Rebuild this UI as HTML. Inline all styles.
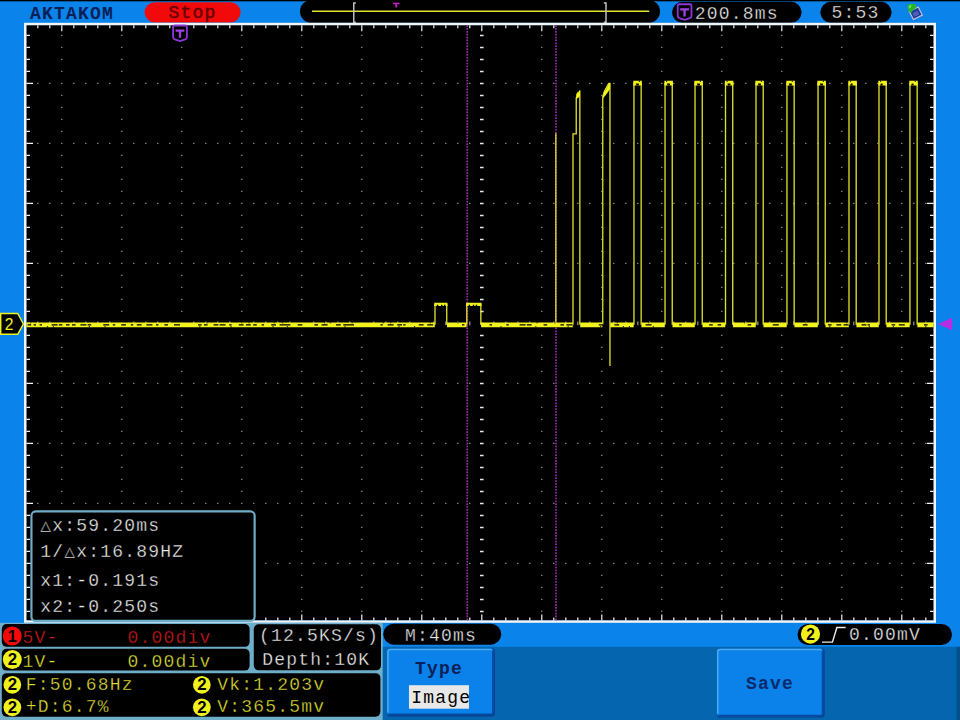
<!DOCTYPE html><html><head><meta charset="utf-8"><style>html,body{margin:0;padding:0;background:#0a84ea;width:960px;height:720px;overflow:hidden}</style></head><body><svg width="960" height="720" viewBox="0 0 800 600" style="display:block"><defs><style>text{font-family:"Liberation Mono",monospace;font-size:15px;letter-spacing:1px}.th{stroke:#000;stroke-width:0.26px}</style></defs><rect x="0" y="0" width="800" height="600" fill="#0a84ea"/><rect x="0" y="0" width="800" height="1.1" fill="#000"/><text x="25" y="15.8" fill="#0c2058" font-weight="bold">AKTAKOM</text><rect x="120.5" y="1.8" width="80" height="17" rx="8.5" fill="#f20a0a"/><text x="140.4" y="15.2" fill="#640000" stroke="#640000" stroke-width="0.35">Stop</text><rect x="250" y="0" width="300" height="19" rx="9.5" fill="#000"/><line x1="260" y1="9.3" x2="541" y2="9.3" stroke="#e2e232" stroke-width="1.3"/><path d="M296.5 2.5 H294.8 V18.5 H296.5" fill="none" stroke="#c4c4c4" stroke-width="1.2"/><path d="M503.2 2.5 H505 V18.5 H503.2" fill="none" stroke="#c4c4c4" stroke-width="1.2"/><path d="M327.5 2.3 H333 V3.6 H331 V6.3 H329.5 V3.6 H327.5Z" fill="#c81ec8"/><rect x="560" y="1.5" width="108" height="17.5" rx="8.75" fill="#000"/><path d="M566.25 3.55 H574.75 Q576.25 3.55 576.25 5.05 V13.530000000000001 Q576.25 14.73 574.25 15.330000000000002 L570.5 16.55 L566.75 15.330000000000002 Q564.75 14.73 564.75 13.530000000000001 V5.05 Q564.75 3.55 566.25 3.55Z" fill="#000" stroke="#8c36d8" stroke-width="1.5"/><path d="M566.86 7.73 H574.14 M570.5 7.73 V13.82" fill="none" stroke="#a040e8" stroke-width="1.9"/><text x="579" y="15.8" fill="#ececec" class="th">200.8ms</text><rect x="683.6" y="1.5" width="59.4" height="17.5" rx="8.75" fill="#000"/><text x="693" y="15.2" fill="#ececec" class="th">5:53</text><g><path d="M757.8 9.6 L765.2 5.8 L768.6 12.6 L761.2 16.2Z" fill="#1c3c9c" stroke="#c8bcd8" stroke-width="1"/><path d="M760.5 11 L764.5 9 L766 12 L762 14Z" fill="#5060b0"/><path d="M756 6 Q756.5 3 759.5 3.2 L762.5 3.4 Q764 4.5 763 7 L760.5 8.5 L759.8 10.5 L757.5 10Z" fill="#28b428"/><path d="M757 5.5 Q757.8 4 759.5 4.3 L758.5 7.5Z" fill="#70e070"/></g><rect x="22" y="21" width="756" height="496" fill="#000"/><path d="M51 29h1v1h-1zM51 39h1v1h-1zM51 49h1v1h-1zM51 59h1v1h-1zM51 69h1v1h-1zM51 79h1v1h-1zM51 89h1v1h-1zM51 99h1v1h-1zM51 109h1v1h-1zM51 119h1v1h-1zM51 129h1v1h-1zM51 139h1v1h-1zM51 149h1v1h-1zM51 159h1v1h-1zM51 169h1v1h-1zM51 179h1v1h-1zM51 189h1v1h-1zM51 199h1v1h-1zM51 209h1v1h-1zM51 219h1v1h-1zM51 229h1v1h-1zM51 239h1v1h-1zM51 249h1v1h-1zM51 259h1v1h-1zM51 269h1v1h-1zM51 279h1v1h-1zM51 289h1v1h-1zM51 299h1v1h-1zM51 309h1v1h-1zM51 319h1v1h-1zM51 329h1v1h-1zM51 339h1v1h-1zM51 349h1v1h-1zM51 359h1v1h-1zM51 369h1v1h-1zM51 379h1v1h-1zM51 389h1v1h-1zM51 399h1v1h-1zM51 409h1v1h-1zM51 419h1v1h-1zM51 429h1v1h-1zM51 439h1v1h-1zM51 449h1v1h-1zM51 459h1v1h-1zM51 469h1v1h-1zM51 479h1v1h-1zM51 489h1v1h-1zM51 499h1v1h-1zM51 509h1v1h-1zM101 29h1v1h-1zM101 39h1v1h-1zM101 49h1v1h-1zM101 59h1v1h-1zM101 69h1v1h-1zM101 79h1v1h-1zM101 89h1v1h-1zM101 99h1v1h-1zM101 109h1v1h-1zM101 119h1v1h-1zM101 129h1v1h-1zM101 139h1v1h-1zM101 149h1v1h-1zM101 159h1v1h-1zM101 169h1v1h-1zM101 179h1v1h-1zM101 189h1v1h-1zM101 199h1v1h-1zM101 209h1v1h-1zM101 219h1v1h-1zM101 229h1v1h-1zM101 239h1v1h-1zM101 249h1v1h-1zM101 259h1v1h-1zM101 269h1v1h-1zM101 279h1v1h-1zM101 289h1v1h-1zM101 299h1v1h-1zM101 309h1v1h-1zM101 319h1v1h-1zM101 329h1v1h-1zM101 339h1v1h-1zM101 349h1v1h-1zM101 359h1v1h-1zM101 369h1v1h-1zM101 379h1v1h-1zM101 389h1v1h-1zM101 399h1v1h-1zM101 409h1v1h-1zM101 419h1v1h-1zM101 429h1v1h-1zM101 439h1v1h-1zM101 449h1v1h-1zM101 459h1v1h-1zM101 469h1v1h-1zM101 479h1v1h-1zM101 489h1v1h-1zM101 499h1v1h-1zM101 509h1v1h-1zM151 29h1v1h-1zM151 39h1v1h-1zM151 49h1v1h-1zM151 59h1v1h-1zM151 69h1v1h-1zM151 79h1v1h-1zM151 89h1v1h-1zM151 99h1v1h-1zM151 109h1v1h-1zM151 119h1v1h-1zM151 129h1v1h-1zM151 139h1v1h-1zM151 149h1v1h-1zM151 159h1v1h-1zM151 169h1v1h-1zM151 179h1v1h-1zM151 189h1v1h-1zM151 199h1v1h-1zM151 209h1v1h-1zM151 219h1v1h-1zM151 229h1v1h-1zM151 239h1v1h-1zM151 249h1v1h-1zM151 259h1v1h-1zM151 269h1v1h-1zM151 279h1v1h-1zM151 289h1v1h-1zM151 299h1v1h-1zM151 309h1v1h-1zM151 319h1v1h-1zM151 329h1v1h-1zM151 339h1v1h-1zM151 349h1v1h-1zM151 359h1v1h-1zM151 369h1v1h-1zM151 379h1v1h-1zM151 389h1v1h-1zM151 399h1v1h-1zM151 409h1v1h-1zM151 419h1v1h-1zM151 429h1v1h-1zM151 439h1v1h-1zM151 449h1v1h-1zM151 459h1v1h-1zM151 469h1v1h-1zM151 479h1v1h-1zM151 489h1v1h-1zM151 499h1v1h-1zM151 509h1v1h-1zM201 29h1v1h-1zM201 39h1v1h-1zM201 49h1v1h-1zM201 59h1v1h-1zM201 69h1v1h-1zM201 79h1v1h-1zM201 89h1v1h-1zM201 99h1v1h-1zM201 109h1v1h-1zM201 119h1v1h-1zM201 129h1v1h-1zM201 139h1v1h-1zM201 149h1v1h-1zM201 159h1v1h-1zM201 169h1v1h-1zM201 179h1v1h-1zM201 189h1v1h-1zM201 199h1v1h-1zM201 209h1v1h-1zM201 219h1v1h-1zM201 229h1v1h-1zM201 239h1v1h-1zM201 249h1v1h-1zM201 259h1v1h-1zM201 269h1v1h-1zM201 279h1v1h-1zM201 289h1v1h-1zM201 299h1v1h-1zM201 309h1v1h-1zM201 319h1v1h-1zM201 329h1v1h-1zM201 339h1v1h-1zM201 349h1v1h-1zM201 359h1v1h-1zM201 369h1v1h-1zM201 379h1v1h-1zM201 389h1v1h-1zM201 399h1v1h-1zM201 409h1v1h-1zM201 419h1v1h-1zM201 429h1v1h-1zM201 439h1v1h-1zM201 449h1v1h-1zM201 459h1v1h-1zM201 469h1v1h-1zM201 479h1v1h-1zM201 489h1v1h-1zM201 499h1v1h-1zM201 509h1v1h-1zM251 29h1v1h-1zM251 39h1v1h-1zM251 49h1v1h-1zM251 59h1v1h-1zM251 69h1v1h-1zM251 79h1v1h-1zM251 89h1v1h-1zM251 99h1v1h-1zM251 109h1v1h-1zM251 119h1v1h-1zM251 129h1v1h-1zM251 139h1v1h-1zM251 149h1v1h-1zM251 159h1v1h-1zM251 169h1v1h-1zM251 179h1v1h-1zM251 189h1v1h-1zM251 199h1v1h-1zM251 209h1v1h-1zM251 219h1v1h-1zM251 229h1v1h-1zM251 239h1v1h-1zM251 249h1v1h-1zM251 259h1v1h-1zM251 269h1v1h-1zM251 279h1v1h-1zM251 289h1v1h-1zM251 299h1v1h-1zM251 309h1v1h-1zM251 319h1v1h-1zM251 329h1v1h-1zM251 339h1v1h-1zM251 349h1v1h-1zM251 359h1v1h-1zM251 369h1v1h-1zM251 379h1v1h-1zM251 389h1v1h-1zM251 399h1v1h-1zM251 409h1v1h-1zM251 419h1v1h-1zM251 429h1v1h-1zM251 439h1v1h-1zM251 449h1v1h-1zM251 459h1v1h-1zM251 469h1v1h-1zM251 479h1v1h-1zM251 489h1v1h-1zM251 499h1v1h-1zM251 509h1v1h-1zM301 29h1v1h-1zM301 39h1v1h-1zM301 49h1v1h-1zM301 59h1v1h-1zM301 69h1v1h-1zM301 79h1v1h-1zM301 89h1v1h-1zM301 99h1v1h-1zM301 109h1v1h-1zM301 119h1v1h-1zM301 129h1v1h-1zM301 139h1v1h-1zM301 149h1v1h-1zM301 159h1v1h-1zM301 169h1v1h-1zM301 179h1v1h-1zM301 189h1v1h-1zM301 199h1v1h-1zM301 209h1v1h-1zM301 219h1v1h-1zM301 229h1v1h-1zM301 239h1v1h-1zM301 249h1v1h-1zM301 259h1v1h-1zM301 269h1v1h-1zM301 279h1v1h-1zM301 289h1v1h-1zM301 299h1v1h-1zM301 309h1v1h-1zM301 319h1v1h-1zM301 329h1v1h-1zM301 339h1v1h-1zM301 349h1v1h-1zM301 359h1v1h-1zM301 369h1v1h-1zM301 379h1v1h-1zM301 389h1v1h-1zM301 399h1v1h-1zM301 409h1v1h-1zM301 419h1v1h-1zM301 429h1v1h-1zM301 439h1v1h-1zM301 449h1v1h-1zM301 459h1v1h-1zM301 469h1v1h-1zM301 479h1v1h-1zM301 489h1v1h-1zM301 499h1v1h-1zM301 509h1v1h-1zM351 29h1v1h-1zM351 39h1v1h-1zM351 49h1v1h-1zM351 59h1v1h-1zM351 69h1v1h-1zM351 79h1v1h-1zM351 89h1v1h-1zM351 99h1v1h-1zM351 109h1v1h-1zM351 119h1v1h-1zM351 129h1v1h-1zM351 139h1v1h-1zM351 149h1v1h-1zM351 159h1v1h-1zM351 169h1v1h-1zM351 179h1v1h-1zM351 189h1v1h-1zM351 199h1v1h-1zM351 209h1v1h-1zM351 219h1v1h-1zM351 229h1v1h-1zM351 239h1v1h-1zM351 249h1v1h-1zM351 259h1v1h-1zM351 269h1v1h-1zM351 279h1v1h-1zM351 289h1v1h-1zM351 299h1v1h-1zM351 309h1v1h-1zM351 319h1v1h-1zM351 329h1v1h-1zM351 339h1v1h-1zM351 349h1v1h-1zM351 359h1v1h-1zM351 369h1v1h-1zM351 379h1v1h-1zM351 389h1v1h-1zM351 399h1v1h-1zM351 409h1v1h-1zM351 419h1v1h-1zM351 429h1v1h-1zM351 439h1v1h-1zM351 449h1v1h-1zM351 459h1v1h-1zM351 469h1v1h-1zM351 479h1v1h-1zM351 489h1v1h-1zM351 499h1v1h-1zM351 509h1v1h-1zM451 29h1v1h-1zM451 39h1v1h-1zM451 49h1v1h-1zM451 59h1v1h-1zM451 69h1v1h-1zM451 79h1v1h-1zM451 89h1v1h-1zM451 99h1v1h-1zM451 109h1v1h-1zM451 119h1v1h-1zM451 129h1v1h-1zM451 139h1v1h-1zM451 149h1v1h-1zM451 159h1v1h-1zM451 169h1v1h-1zM451 179h1v1h-1zM451 189h1v1h-1zM451 199h1v1h-1zM451 209h1v1h-1zM451 219h1v1h-1zM451 229h1v1h-1zM451 239h1v1h-1zM451 249h1v1h-1zM451 259h1v1h-1zM451 269h1v1h-1zM451 279h1v1h-1zM451 289h1v1h-1zM451 299h1v1h-1zM451 309h1v1h-1zM451 319h1v1h-1zM451 329h1v1h-1zM451 339h1v1h-1zM451 349h1v1h-1zM451 359h1v1h-1zM451 369h1v1h-1zM451 379h1v1h-1zM451 389h1v1h-1zM451 399h1v1h-1zM451 409h1v1h-1zM451 419h1v1h-1zM451 429h1v1h-1zM451 439h1v1h-1zM451 449h1v1h-1zM451 459h1v1h-1zM451 469h1v1h-1zM451 479h1v1h-1zM451 489h1v1h-1zM451 499h1v1h-1zM451 509h1v1h-1zM501 29h1v1h-1zM501 39h1v1h-1zM501 49h1v1h-1zM501 59h1v1h-1zM501 69h1v1h-1zM501 79h1v1h-1zM501 89h1v1h-1zM501 99h1v1h-1zM501 109h1v1h-1zM501 119h1v1h-1zM501 129h1v1h-1zM501 139h1v1h-1zM501 149h1v1h-1zM501 159h1v1h-1zM501 169h1v1h-1zM501 179h1v1h-1zM501 189h1v1h-1zM501 199h1v1h-1zM501 209h1v1h-1zM501 219h1v1h-1zM501 229h1v1h-1zM501 239h1v1h-1zM501 249h1v1h-1zM501 259h1v1h-1zM501 269h1v1h-1zM501 279h1v1h-1zM501 289h1v1h-1zM501 299h1v1h-1zM501 309h1v1h-1zM501 319h1v1h-1zM501 329h1v1h-1zM501 339h1v1h-1zM501 349h1v1h-1zM501 359h1v1h-1zM501 369h1v1h-1zM501 379h1v1h-1zM501 389h1v1h-1zM501 399h1v1h-1zM501 409h1v1h-1zM501 419h1v1h-1zM501 429h1v1h-1zM501 439h1v1h-1zM501 449h1v1h-1zM501 459h1v1h-1zM501 469h1v1h-1zM501 479h1v1h-1zM501 489h1v1h-1zM501 499h1v1h-1zM501 509h1v1h-1zM551 29h1v1h-1zM551 39h1v1h-1zM551 49h1v1h-1zM551 59h1v1h-1zM551 69h1v1h-1zM551 79h1v1h-1zM551 89h1v1h-1zM551 99h1v1h-1zM551 109h1v1h-1zM551 119h1v1h-1zM551 129h1v1h-1zM551 139h1v1h-1zM551 149h1v1h-1zM551 159h1v1h-1zM551 169h1v1h-1zM551 179h1v1h-1zM551 189h1v1h-1zM551 199h1v1h-1zM551 209h1v1h-1zM551 219h1v1h-1zM551 229h1v1h-1zM551 239h1v1h-1zM551 249h1v1h-1zM551 259h1v1h-1zM551 269h1v1h-1zM551 279h1v1h-1zM551 289h1v1h-1zM551 299h1v1h-1zM551 309h1v1h-1zM551 319h1v1h-1zM551 329h1v1h-1zM551 339h1v1h-1zM551 349h1v1h-1zM551 359h1v1h-1zM551 369h1v1h-1zM551 379h1v1h-1zM551 389h1v1h-1zM551 399h1v1h-1zM551 409h1v1h-1zM551 419h1v1h-1zM551 429h1v1h-1zM551 439h1v1h-1zM551 449h1v1h-1zM551 459h1v1h-1zM551 469h1v1h-1zM551 479h1v1h-1zM551 489h1v1h-1zM551 499h1v1h-1zM551 509h1v1h-1zM601 29h1v1h-1zM601 39h1v1h-1zM601 49h1v1h-1zM601 59h1v1h-1zM601 69h1v1h-1zM601 79h1v1h-1zM601 89h1v1h-1zM601 99h1v1h-1zM601 109h1v1h-1zM601 119h1v1h-1zM601 129h1v1h-1zM601 139h1v1h-1zM601 149h1v1h-1zM601 159h1v1h-1zM601 169h1v1h-1zM601 179h1v1h-1zM601 189h1v1h-1zM601 199h1v1h-1zM601 209h1v1h-1zM601 219h1v1h-1zM601 229h1v1h-1zM601 239h1v1h-1zM601 249h1v1h-1zM601 259h1v1h-1zM601 269h1v1h-1zM601 279h1v1h-1zM601 289h1v1h-1zM601 299h1v1h-1zM601 309h1v1h-1zM601 319h1v1h-1zM601 329h1v1h-1zM601 339h1v1h-1zM601 349h1v1h-1zM601 359h1v1h-1zM601 369h1v1h-1zM601 379h1v1h-1zM601 389h1v1h-1zM601 399h1v1h-1zM601 409h1v1h-1zM601 419h1v1h-1zM601 429h1v1h-1zM601 439h1v1h-1zM601 449h1v1h-1zM601 459h1v1h-1zM601 469h1v1h-1zM601 479h1v1h-1zM601 489h1v1h-1zM601 499h1v1h-1zM601 509h1v1h-1zM651 29h1v1h-1zM651 39h1v1h-1zM651 49h1v1h-1zM651 59h1v1h-1zM651 69h1v1h-1zM651 79h1v1h-1zM651 89h1v1h-1zM651 99h1v1h-1zM651 109h1v1h-1zM651 119h1v1h-1zM651 129h1v1h-1zM651 139h1v1h-1zM651 149h1v1h-1zM651 159h1v1h-1zM651 169h1v1h-1zM651 179h1v1h-1zM651 189h1v1h-1zM651 199h1v1h-1zM651 209h1v1h-1zM651 219h1v1h-1zM651 229h1v1h-1zM651 239h1v1h-1zM651 249h1v1h-1zM651 259h1v1h-1zM651 269h1v1h-1zM651 279h1v1h-1zM651 289h1v1h-1zM651 299h1v1h-1zM651 309h1v1h-1zM651 319h1v1h-1zM651 329h1v1h-1zM651 339h1v1h-1zM651 349h1v1h-1zM651 359h1v1h-1zM651 369h1v1h-1zM651 379h1v1h-1zM651 389h1v1h-1zM651 399h1v1h-1zM651 409h1v1h-1zM651 419h1v1h-1zM651 429h1v1h-1zM651 439h1v1h-1zM651 449h1v1h-1zM651 459h1v1h-1zM651 469h1v1h-1zM651 479h1v1h-1zM651 489h1v1h-1zM651 499h1v1h-1zM651 509h1v1h-1zM701 29h1v1h-1zM701 39h1v1h-1zM701 49h1v1h-1zM701 59h1v1h-1zM701 69h1v1h-1zM701 79h1v1h-1zM701 89h1v1h-1zM701 99h1v1h-1zM701 109h1v1h-1zM701 119h1v1h-1zM701 129h1v1h-1zM701 139h1v1h-1zM701 149h1v1h-1zM701 159h1v1h-1zM701 169h1v1h-1zM701 179h1v1h-1zM701 189h1v1h-1zM701 199h1v1h-1zM701 209h1v1h-1zM701 219h1v1h-1zM701 229h1v1h-1zM701 239h1v1h-1zM701 249h1v1h-1zM701 259h1v1h-1zM701 269h1v1h-1zM701 279h1v1h-1zM701 289h1v1h-1zM701 299h1v1h-1zM701 309h1v1h-1zM701 319h1v1h-1zM701 329h1v1h-1zM701 339h1v1h-1zM701 349h1v1h-1zM701 359h1v1h-1zM701 369h1v1h-1zM701 379h1v1h-1zM701 389h1v1h-1zM701 399h1v1h-1zM701 409h1v1h-1zM701 419h1v1h-1zM701 429h1v1h-1zM701 439h1v1h-1zM701 449h1v1h-1zM701 459h1v1h-1zM701 469h1v1h-1zM701 479h1v1h-1zM701 489h1v1h-1zM701 499h1v1h-1zM701 509h1v1h-1zM751 29h1v1h-1zM751 39h1v1h-1zM751 49h1v1h-1zM751 59h1v1h-1zM751 69h1v1h-1zM751 79h1v1h-1zM751 89h1v1h-1zM751 99h1v1h-1zM751 109h1v1h-1zM751 119h1v1h-1zM751 129h1v1h-1zM751 139h1v1h-1zM751 149h1v1h-1zM751 159h1v1h-1zM751 169h1v1h-1zM751 179h1v1h-1zM751 189h1v1h-1zM751 199h1v1h-1zM751 209h1v1h-1zM751 219h1v1h-1zM751 229h1v1h-1zM751 239h1v1h-1zM751 249h1v1h-1zM751 259h1v1h-1zM751 269h1v1h-1zM751 279h1v1h-1zM751 289h1v1h-1zM751 299h1v1h-1zM751 309h1v1h-1zM751 319h1v1h-1zM751 329h1v1h-1zM751 339h1v1h-1zM751 349h1v1h-1zM751 359h1v1h-1zM751 369h1v1h-1zM751 379h1v1h-1zM751 389h1v1h-1zM751 399h1v1h-1zM751 409h1v1h-1zM751 419h1v1h-1zM751 429h1v1h-1zM751 439h1v1h-1zM751 449h1v1h-1zM751 459h1v1h-1zM751 469h1v1h-1zM751 479h1v1h-1zM751 489h1v1h-1zM751 499h1v1h-1zM751 509h1v1h-1zM31 69h1v1h-1zM41 69h1v1h-1zM61 69h1v1h-1zM71 69h1v1h-1zM81 69h1v1h-1zM91 69h1v1h-1zM111 69h1v1h-1zM121 69h1v1h-1zM131 69h1v1h-1zM141 69h1v1h-1zM161 69h1v1h-1zM171 69h1v1h-1zM181 69h1v1h-1zM191 69h1v1h-1zM211 69h1v1h-1zM221 69h1v1h-1zM231 69h1v1h-1zM241 69h1v1h-1zM261 69h1v1h-1zM271 69h1v1h-1zM281 69h1v1h-1zM291 69h1v1h-1zM311 69h1v1h-1zM321 69h1v1h-1zM331 69h1v1h-1zM341 69h1v1h-1zM361 69h1v1h-1zM371 69h1v1h-1zM381 69h1v1h-1zM391 69h1v1h-1zM411 69h1v1h-1zM421 69h1v1h-1zM431 69h1v1h-1zM441 69h1v1h-1zM461 69h1v1h-1zM471 69h1v1h-1zM481 69h1v1h-1zM491 69h1v1h-1zM511 69h1v1h-1zM521 69h1v1h-1zM531 69h1v1h-1zM541 69h1v1h-1zM561 69h1v1h-1zM571 69h1v1h-1zM581 69h1v1h-1zM591 69h1v1h-1zM611 69h1v1h-1zM621 69h1v1h-1zM631 69h1v1h-1zM641 69h1v1h-1zM661 69h1v1h-1zM671 69h1v1h-1zM681 69h1v1h-1zM691 69h1v1h-1zM711 69h1v1h-1zM721 69h1v1h-1zM731 69h1v1h-1zM741 69h1v1h-1zM761 69h1v1h-1zM771 69h1v1h-1zM31 119h1v1h-1zM41 119h1v1h-1zM61 119h1v1h-1zM71 119h1v1h-1zM81 119h1v1h-1zM91 119h1v1h-1zM111 119h1v1h-1zM121 119h1v1h-1zM131 119h1v1h-1zM141 119h1v1h-1zM161 119h1v1h-1zM171 119h1v1h-1zM181 119h1v1h-1zM191 119h1v1h-1zM211 119h1v1h-1zM221 119h1v1h-1zM231 119h1v1h-1zM241 119h1v1h-1zM261 119h1v1h-1zM271 119h1v1h-1zM281 119h1v1h-1zM291 119h1v1h-1zM311 119h1v1h-1zM321 119h1v1h-1zM331 119h1v1h-1zM341 119h1v1h-1zM361 119h1v1h-1zM371 119h1v1h-1zM381 119h1v1h-1zM391 119h1v1h-1zM411 119h1v1h-1zM421 119h1v1h-1zM431 119h1v1h-1zM441 119h1v1h-1zM461 119h1v1h-1zM471 119h1v1h-1zM481 119h1v1h-1zM491 119h1v1h-1zM511 119h1v1h-1zM521 119h1v1h-1zM531 119h1v1h-1zM541 119h1v1h-1zM561 119h1v1h-1zM571 119h1v1h-1zM581 119h1v1h-1zM591 119h1v1h-1zM611 119h1v1h-1zM621 119h1v1h-1zM631 119h1v1h-1zM641 119h1v1h-1zM661 119h1v1h-1zM671 119h1v1h-1zM681 119h1v1h-1zM691 119h1v1h-1zM711 119h1v1h-1zM721 119h1v1h-1zM731 119h1v1h-1zM741 119h1v1h-1zM761 119h1v1h-1zM771 119h1v1h-1zM31 169h1v1h-1zM41 169h1v1h-1zM61 169h1v1h-1zM71 169h1v1h-1zM81 169h1v1h-1zM91 169h1v1h-1zM111 169h1v1h-1zM121 169h1v1h-1zM131 169h1v1h-1zM141 169h1v1h-1zM161 169h1v1h-1zM171 169h1v1h-1zM181 169h1v1h-1zM191 169h1v1h-1zM211 169h1v1h-1zM221 169h1v1h-1zM231 169h1v1h-1zM241 169h1v1h-1zM261 169h1v1h-1zM271 169h1v1h-1zM281 169h1v1h-1zM291 169h1v1h-1zM311 169h1v1h-1zM321 169h1v1h-1zM331 169h1v1h-1zM341 169h1v1h-1zM361 169h1v1h-1zM371 169h1v1h-1zM381 169h1v1h-1zM391 169h1v1h-1zM411 169h1v1h-1zM421 169h1v1h-1zM431 169h1v1h-1zM441 169h1v1h-1zM461 169h1v1h-1zM471 169h1v1h-1zM481 169h1v1h-1zM491 169h1v1h-1zM511 169h1v1h-1zM521 169h1v1h-1zM531 169h1v1h-1zM541 169h1v1h-1zM561 169h1v1h-1zM571 169h1v1h-1zM581 169h1v1h-1zM591 169h1v1h-1zM611 169h1v1h-1zM621 169h1v1h-1zM631 169h1v1h-1zM641 169h1v1h-1zM661 169h1v1h-1zM671 169h1v1h-1zM681 169h1v1h-1zM691 169h1v1h-1zM711 169h1v1h-1zM721 169h1v1h-1zM731 169h1v1h-1zM741 169h1v1h-1zM761 169h1v1h-1zM771 169h1v1h-1zM31 219h1v1h-1zM41 219h1v1h-1zM61 219h1v1h-1zM71 219h1v1h-1zM81 219h1v1h-1zM91 219h1v1h-1zM111 219h1v1h-1zM121 219h1v1h-1zM131 219h1v1h-1zM141 219h1v1h-1zM161 219h1v1h-1zM171 219h1v1h-1zM181 219h1v1h-1zM191 219h1v1h-1zM211 219h1v1h-1zM221 219h1v1h-1zM231 219h1v1h-1zM241 219h1v1h-1zM261 219h1v1h-1zM271 219h1v1h-1zM281 219h1v1h-1zM291 219h1v1h-1zM311 219h1v1h-1zM321 219h1v1h-1zM331 219h1v1h-1zM341 219h1v1h-1zM361 219h1v1h-1zM371 219h1v1h-1zM381 219h1v1h-1zM391 219h1v1h-1zM411 219h1v1h-1zM421 219h1v1h-1zM431 219h1v1h-1zM441 219h1v1h-1zM461 219h1v1h-1zM471 219h1v1h-1zM481 219h1v1h-1zM491 219h1v1h-1zM511 219h1v1h-1zM521 219h1v1h-1zM531 219h1v1h-1zM541 219h1v1h-1zM561 219h1v1h-1zM571 219h1v1h-1zM581 219h1v1h-1zM591 219h1v1h-1zM611 219h1v1h-1zM621 219h1v1h-1zM631 219h1v1h-1zM641 219h1v1h-1zM661 219h1v1h-1zM671 219h1v1h-1zM681 219h1v1h-1zM691 219h1v1h-1zM711 219h1v1h-1zM721 219h1v1h-1zM731 219h1v1h-1zM741 219h1v1h-1zM761 219h1v1h-1zM771 219h1v1h-1zM31 268h1v3h-1zM41 268h1v3h-1zM61 268h1v3h-1zM71 268h1v3h-1zM81 268h1v3h-1zM91 268h1v3h-1zM111 268h1v3h-1zM121 268h1v3h-1zM131 268h1v3h-1zM141 268h1v3h-1zM161 268h1v3h-1zM171 268h1v3h-1zM181 268h1v3h-1zM191 268h1v3h-1zM211 268h1v3h-1zM221 268h1v3h-1zM231 268h1v3h-1zM241 268h1v3h-1zM261 268h1v3h-1zM271 268h1v3h-1zM281 268h1v3h-1zM291 268h1v3h-1zM311 268h1v3h-1zM321 268h1v3h-1zM331 268h1v3h-1zM341 268h1v3h-1zM361 268h1v3h-1zM371 268h1v3h-1zM381 268h1v3h-1zM391 268h1v3h-1zM411 268h1v3h-1zM421 268h1v3h-1zM431 268h1v3h-1zM441 268h1v3h-1zM461 268h1v3h-1zM471 268h1v3h-1zM481 268h1v3h-1zM491 268h1v3h-1zM511 268h1v3h-1zM521 268h1v3h-1zM531 268h1v3h-1zM541 268h1v3h-1zM561 268h1v3h-1zM571 268h1v3h-1zM581 268h1v3h-1zM591 268h1v3h-1zM611 268h1v3h-1zM621 268h1v3h-1zM631 268h1v3h-1zM641 268h1v3h-1zM661 268h1v3h-1zM671 268h1v3h-1zM681 268h1v3h-1zM691 268h1v3h-1zM711 268h1v3h-1zM721 268h1v3h-1zM731 268h1v3h-1zM741 268h1v3h-1zM761 268h1v3h-1zM771 268h1v3h-1zM31 319h1v1h-1zM41 319h1v1h-1zM61 319h1v1h-1zM71 319h1v1h-1zM81 319h1v1h-1zM91 319h1v1h-1zM111 319h1v1h-1zM121 319h1v1h-1zM131 319h1v1h-1zM141 319h1v1h-1zM161 319h1v1h-1zM171 319h1v1h-1zM181 319h1v1h-1zM191 319h1v1h-1zM211 319h1v1h-1zM221 319h1v1h-1zM231 319h1v1h-1zM241 319h1v1h-1zM261 319h1v1h-1zM271 319h1v1h-1zM281 319h1v1h-1zM291 319h1v1h-1zM311 319h1v1h-1zM321 319h1v1h-1zM331 319h1v1h-1zM341 319h1v1h-1zM361 319h1v1h-1zM371 319h1v1h-1zM381 319h1v1h-1zM391 319h1v1h-1zM411 319h1v1h-1zM421 319h1v1h-1zM431 319h1v1h-1zM441 319h1v1h-1zM461 319h1v1h-1zM471 319h1v1h-1zM481 319h1v1h-1zM491 319h1v1h-1zM511 319h1v1h-1zM521 319h1v1h-1zM531 319h1v1h-1zM541 319h1v1h-1zM561 319h1v1h-1zM571 319h1v1h-1zM581 319h1v1h-1zM591 319h1v1h-1zM611 319h1v1h-1zM621 319h1v1h-1zM631 319h1v1h-1zM641 319h1v1h-1zM661 319h1v1h-1zM671 319h1v1h-1zM681 319h1v1h-1zM691 319h1v1h-1zM711 319h1v1h-1zM721 319h1v1h-1zM731 319h1v1h-1zM741 319h1v1h-1zM761 319h1v1h-1zM771 319h1v1h-1zM31 369h1v1h-1zM41 369h1v1h-1zM61 369h1v1h-1zM71 369h1v1h-1zM81 369h1v1h-1zM91 369h1v1h-1zM111 369h1v1h-1zM121 369h1v1h-1zM131 369h1v1h-1zM141 369h1v1h-1zM161 369h1v1h-1zM171 369h1v1h-1zM181 369h1v1h-1zM191 369h1v1h-1zM211 369h1v1h-1zM221 369h1v1h-1zM231 369h1v1h-1zM241 369h1v1h-1zM261 369h1v1h-1zM271 369h1v1h-1zM281 369h1v1h-1zM291 369h1v1h-1zM311 369h1v1h-1zM321 369h1v1h-1zM331 369h1v1h-1zM341 369h1v1h-1zM361 369h1v1h-1zM371 369h1v1h-1zM381 369h1v1h-1zM391 369h1v1h-1zM411 369h1v1h-1zM421 369h1v1h-1zM431 369h1v1h-1zM441 369h1v1h-1zM461 369h1v1h-1zM471 369h1v1h-1zM481 369h1v1h-1zM491 369h1v1h-1zM511 369h1v1h-1zM521 369h1v1h-1zM531 369h1v1h-1zM541 369h1v1h-1zM561 369h1v1h-1zM571 369h1v1h-1zM581 369h1v1h-1zM591 369h1v1h-1zM611 369h1v1h-1zM621 369h1v1h-1zM631 369h1v1h-1zM641 369h1v1h-1zM661 369h1v1h-1zM671 369h1v1h-1zM681 369h1v1h-1zM691 369h1v1h-1zM711 369h1v1h-1zM721 369h1v1h-1zM731 369h1v1h-1zM741 369h1v1h-1zM761 369h1v1h-1zM771 369h1v1h-1zM31 419h1v1h-1zM41 419h1v1h-1zM61 419h1v1h-1zM71 419h1v1h-1zM81 419h1v1h-1zM91 419h1v1h-1zM111 419h1v1h-1zM121 419h1v1h-1zM131 419h1v1h-1zM141 419h1v1h-1zM161 419h1v1h-1zM171 419h1v1h-1zM181 419h1v1h-1zM191 419h1v1h-1zM211 419h1v1h-1zM221 419h1v1h-1zM231 419h1v1h-1zM241 419h1v1h-1zM261 419h1v1h-1zM271 419h1v1h-1zM281 419h1v1h-1zM291 419h1v1h-1zM311 419h1v1h-1zM321 419h1v1h-1zM331 419h1v1h-1zM341 419h1v1h-1zM361 419h1v1h-1zM371 419h1v1h-1zM381 419h1v1h-1zM391 419h1v1h-1zM411 419h1v1h-1zM421 419h1v1h-1zM431 419h1v1h-1zM441 419h1v1h-1zM461 419h1v1h-1zM471 419h1v1h-1zM481 419h1v1h-1zM491 419h1v1h-1zM511 419h1v1h-1zM521 419h1v1h-1zM531 419h1v1h-1zM541 419h1v1h-1zM561 419h1v1h-1zM571 419h1v1h-1zM581 419h1v1h-1zM591 419h1v1h-1zM611 419h1v1h-1zM621 419h1v1h-1zM631 419h1v1h-1zM641 419h1v1h-1zM661 419h1v1h-1zM671 419h1v1h-1zM681 419h1v1h-1zM691 419h1v1h-1zM711 419h1v1h-1zM721 419h1v1h-1zM731 419h1v1h-1zM741 419h1v1h-1zM761 419h1v1h-1zM771 419h1v1h-1zM31 469h1v1h-1zM41 469h1v1h-1zM61 469h1v1h-1zM71 469h1v1h-1zM81 469h1v1h-1zM91 469h1v1h-1zM111 469h1v1h-1zM121 469h1v1h-1zM131 469h1v1h-1zM141 469h1v1h-1zM161 469h1v1h-1zM171 469h1v1h-1zM181 469h1v1h-1zM191 469h1v1h-1zM211 469h1v1h-1zM221 469h1v1h-1zM231 469h1v1h-1zM241 469h1v1h-1zM261 469h1v1h-1zM271 469h1v1h-1zM281 469h1v1h-1zM291 469h1v1h-1zM311 469h1v1h-1zM321 469h1v1h-1zM331 469h1v1h-1zM341 469h1v1h-1zM361 469h1v1h-1zM371 469h1v1h-1zM381 469h1v1h-1zM391 469h1v1h-1zM411 469h1v1h-1zM421 469h1v1h-1zM431 469h1v1h-1zM441 469h1v1h-1zM461 469h1v1h-1zM471 469h1v1h-1zM481 469h1v1h-1zM491 469h1v1h-1zM511 469h1v1h-1zM521 469h1v1h-1zM531 469h1v1h-1zM541 469h1v1h-1zM561 469h1v1h-1zM571 469h1v1h-1zM581 469h1v1h-1zM591 469h1v1h-1zM611 469h1v1h-1zM621 469h1v1h-1zM631 469h1v1h-1zM641 469h1v1h-1zM661 469h1v1h-1zM671 469h1v1h-1zM681 469h1v1h-1zM691 469h1v1h-1zM711 469h1v1h-1zM721 469h1v1h-1zM731 469h1v1h-1zM741 469h1v1h-1zM761 469h1v1h-1zM771 469h1v1h-1z" fill="#9a9a9a"/><path d="M400 29h3v1.2h-3zM400 39h3v1.2h-3zM400 49h3v1.2h-3zM400 59h3v1.2h-3zM400 69h3v1.2h-3zM400 79h3v1.2h-3zM400 89h3v1.2h-3zM400 99h3v1.2h-3zM400 109h3v1.2h-3zM400 119h3v1.2h-3zM400 129h3v1.2h-3zM400 139h3v1.2h-3zM400 149h3v1.2h-3zM400 159h3v1.2h-3zM400 169h3v1.2h-3zM400 179h3v1.2h-3zM400 189h3v1.2h-3zM400 199h3v1.2h-3zM400 209h3v1.2h-3zM400 219h3v1.2h-3zM400 229h3v1.2h-3zM400 239h3v1.2h-3zM400 249h3v1.2h-3zM400 259h3v1.2h-3zM400 269h3v1.2h-3zM400 279h3v1.2h-3zM400 289h3v1.2h-3zM400 299h3v1.2h-3zM400 309h3v1.2h-3zM400 319h3v1.2h-3zM400 329h3v1.2h-3zM400 339h3v1.2h-3zM400 349h3v1.2h-3zM400 359h3v1.2h-3zM400 369h3v1.2h-3zM400 379h3v1.2h-3zM400 389h3v1.2h-3zM400 399h3v1.2h-3zM400 409h3v1.2h-3zM400 419h3v1.2h-3zM400 429h3v1.2h-3zM400 439h3v1.2h-3zM400 449h3v1.2h-3zM400 459h3v1.2h-3zM400 469h3v1.2h-3zM400 479h3v1.2h-3zM400 489h3v1.2h-3zM400 499h3v1.2h-3zM400 509h3v1.2h-3z" fill="#e8e8e8"/><path d="M31 21h1v2.5h-1zM31 514.5h1v2.5h-1zM41 21h1v2.5h-1zM41 514.5h1v2.5h-1zM51 21h1v5h-1zM51 512h1v5h-1zM61 21h1v2.5h-1zM61 514.5h1v2.5h-1zM71 21h1v2.5h-1zM71 514.5h1v2.5h-1zM81 21h1v2.5h-1zM81 514.5h1v2.5h-1zM91 21h1v2.5h-1zM91 514.5h1v2.5h-1zM101 21h1v5h-1zM101 512h1v5h-1zM111 21h1v2.5h-1zM111 514.5h1v2.5h-1zM121 21h1v2.5h-1zM121 514.5h1v2.5h-1zM131 21h1v2.5h-1zM131 514.5h1v2.5h-1zM141 21h1v2.5h-1zM141 514.5h1v2.5h-1zM151 21h1v5h-1zM151 512h1v5h-1zM161 21h1v2.5h-1zM161 514.5h1v2.5h-1zM171 21h1v2.5h-1zM171 514.5h1v2.5h-1zM181 21h1v2.5h-1zM181 514.5h1v2.5h-1zM191 21h1v2.5h-1zM191 514.5h1v2.5h-1zM201 21h1v5h-1zM201 512h1v5h-1zM211 21h1v2.5h-1zM211 514.5h1v2.5h-1zM221 21h1v2.5h-1zM221 514.5h1v2.5h-1zM231 21h1v2.5h-1zM231 514.5h1v2.5h-1zM241 21h1v2.5h-1zM241 514.5h1v2.5h-1zM251 21h1v5h-1zM251 512h1v5h-1zM261 21h1v2.5h-1zM261 514.5h1v2.5h-1zM271 21h1v2.5h-1zM271 514.5h1v2.5h-1zM281 21h1v2.5h-1zM281 514.5h1v2.5h-1zM291 21h1v2.5h-1zM291 514.5h1v2.5h-1zM301 21h1v5h-1zM301 512h1v5h-1zM311 21h1v2.5h-1zM311 514.5h1v2.5h-1zM321 21h1v2.5h-1zM321 514.5h1v2.5h-1zM331 21h1v2.5h-1zM331 514.5h1v2.5h-1zM341 21h1v2.5h-1zM341 514.5h1v2.5h-1zM351 21h1v5h-1zM351 512h1v5h-1zM361 21h1v2.5h-1zM361 514.5h1v2.5h-1zM371 21h1v2.5h-1zM371 514.5h1v2.5h-1zM381 21h1v2.5h-1zM381 514.5h1v2.5h-1zM391 21h1v2.5h-1zM391 514.5h1v2.5h-1zM401 21h1v5h-1zM401 512h1v5h-1zM411 21h1v2.5h-1zM411 514.5h1v2.5h-1zM421 21h1v2.5h-1zM421 514.5h1v2.5h-1zM431 21h1v2.5h-1zM431 514.5h1v2.5h-1zM441 21h1v2.5h-1zM441 514.5h1v2.5h-1zM451 21h1v5h-1zM451 512h1v5h-1zM461 21h1v2.5h-1zM461 514.5h1v2.5h-1zM471 21h1v2.5h-1zM471 514.5h1v2.5h-1zM481 21h1v2.5h-1zM481 514.5h1v2.5h-1zM491 21h1v2.5h-1zM491 514.5h1v2.5h-1zM501 21h1v5h-1zM501 512h1v5h-1zM511 21h1v2.5h-1zM511 514.5h1v2.5h-1zM521 21h1v2.5h-1zM521 514.5h1v2.5h-1zM531 21h1v2.5h-1zM531 514.5h1v2.5h-1zM541 21h1v2.5h-1zM541 514.5h1v2.5h-1zM551 21h1v5h-1zM551 512h1v5h-1zM561 21h1v2.5h-1zM561 514.5h1v2.5h-1zM571 21h1v2.5h-1zM571 514.5h1v2.5h-1zM581 21h1v2.5h-1zM581 514.5h1v2.5h-1zM591 21h1v2.5h-1zM591 514.5h1v2.5h-1zM601 21h1v5h-1zM601 512h1v5h-1zM611 21h1v2.5h-1zM611 514.5h1v2.5h-1zM621 21h1v2.5h-1zM621 514.5h1v2.5h-1zM631 21h1v2.5h-1zM631 514.5h1v2.5h-1zM641 21h1v2.5h-1zM641 514.5h1v2.5h-1zM651 21h1v5h-1zM651 512h1v5h-1zM661 21h1v2.5h-1zM661 514.5h1v2.5h-1zM671 21h1v2.5h-1zM671 514.5h1v2.5h-1zM681 21h1v2.5h-1zM681 514.5h1v2.5h-1zM691 21h1v2.5h-1zM691 514.5h1v2.5h-1zM701 21h1v5h-1zM701 512h1v5h-1zM711 21h1v2.5h-1zM711 514.5h1v2.5h-1zM721 21h1v2.5h-1zM721 514.5h1v2.5h-1zM731 21h1v2.5h-1zM731 514.5h1v2.5h-1zM741 21h1v2.5h-1zM741 514.5h1v2.5h-1zM751 21h1v5h-1zM751 512h1v5h-1zM761 21h1v2.5h-1zM761 514.5h1v2.5h-1zM771 21h1v2.5h-1zM771 514.5h1v2.5h-1zM22 29h3v1h-3zM775 29h3v1h-3zM22 39h3v1h-3zM775 39h3v1h-3zM22 49h3v1h-3zM775 49h3v1h-3zM22 59h3v1h-3zM775 59h3v1h-3zM22 69h5.5v1h-5.5zM772.5 69h5.5v1h-5.5zM22 79h3v1h-3zM775 79h3v1h-3zM22 89h3v1h-3zM775 89h3v1h-3zM22 99h3v1h-3zM775 99h3v1h-3zM22 109h3v1h-3zM775 109h3v1h-3zM22 119h5.5v1h-5.5zM772.5 119h5.5v1h-5.5zM22 129h3v1h-3zM775 129h3v1h-3zM22 139h3v1h-3zM775 139h3v1h-3zM22 149h3v1h-3zM775 149h3v1h-3zM22 159h3v1h-3zM775 159h3v1h-3zM22 169h5.5v1h-5.5zM772.5 169h5.5v1h-5.5zM22 179h3v1h-3zM775 179h3v1h-3zM22 189h3v1h-3zM775 189h3v1h-3zM22 199h3v1h-3zM775 199h3v1h-3zM22 209h3v1h-3zM775 209h3v1h-3zM22 219h5.5v1h-5.5zM772.5 219h5.5v1h-5.5zM22 229h3v1h-3zM775 229h3v1h-3zM22 239h3v1h-3zM775 239h3v1h-3zM22 249h3v1h-3zM775 249h3v1h-3zM22 259h3v1h-3zM775 259h3v1h-3zM22 269h5.5v1h-5.5zM772.5 269h5.5v1h-5.5zM22 279h3v1h-3zM775 279h3v1h-3zM22 289h3v1h-3zM775 289h3v1h-3zM22 299h3v1h-3zM775 299h3v1h-3zM22 309h3v1h-3zM775 309h3v1h-3zM22 319h5.5v1h-5.5zM772.5 319h5.5v1h-5.5zM22 329h3v1h-3zM775 329h3v1h-3zM22 339h3v1h-3zM775 339h3v1h-3zM22 349h3v1h-3zM775 349h3v1h-3zM22 359h3v1h-3zM775 359h3v1h-3zM22 369h5.5v1h-5.5zM772.5 369h5.5v1h-5.5zM22 379h3v1h-3zM775 379h3v1h-3zM22 389h3v1h-3zM775 389h3v1h-3zM22 399h3v1h-3zM775 399h3v1h-3zM22 409h3v1h-3zM775 409h3v1h-3zM22 419h5.5v1h-5.5zM772.5 419h5.5v1h-5.5zM22 429h3v1h-3zM775 429h3v1h-3zM22 439h3v1h-3zM775 439h3v1h-3zM22 449h3v1h-3zM775 449h3v1h-3zM22 459h3v1h-3zM775 459h3v1h-3zM22 469h5.5v1h-5.5zM772.5 469h5.5v1h-5.5zM22 479h3v1h-3zM775 479h3v1h-3zM22 489h3v1h-3zM775 489h3v1h-3zM22 499h3v1h-3zM775 499h3v1h-3zM22 509h3v1h-3zM775 509h3v1h-3z" fill="#f4f4f4"/><rect x="21" y="20" width="758" height="498" fill="none" stroke="#f4f4f4" stroke-width="2"/><line x1="389.4" y1="21" x2="389.4" y2="517" stroke="#9a2ea6" stroke-width="1.4" stroke-dasharray="1.4 1"/><line x1="463.3" y1="21" x2="463.3" y2="517" stroke="#9a2ea6" stroke-width="1.4" stroke-dasharray="1.4 1"/><path d="M362.5 270.7V253.5M372.3 253.5V270.7M389.0 270.7V253.5M400.7 253.5V270.7M463.2 270.7V111M477.5 270.7V111.5H480.2V81.5L483.2 75.5V270.7M502.3 270.7V80.5L504 75.5L507.3 69.5L508.3 69.5V305M528.3 270.7V69M534.3 69V270.7M554.2 270.7V69M560.2 69V270.7M579.2 270.7V69M585.2 69V270.7M604.6 270.7V69M610.6 69V270.7M630.0 270.7V69M636.0 69V270.7M655.8 270.7V69M661.8 69V270.7M681.7 270.7V69M687.7 69V270.7M707.5 270.7V69M713.5 69V270.7M732.5 270.7V69M738.5 69V270.7M758.3 270.7V69M764.3 69V270.7" fill="none" stroke="#e0e02e" stroke-width="1.1"/><path d="M22 268.7H362.3V272.7H22ZM372.5 268.7H388.8V272.7H372.5ZM400.9 268.7H477.3V272.7H400.9ZM483.5 268.7H502.0V272.7H483.5ZM508.5 268.7H528.0999999999999V272.7H508.5ZM534.5 268.7H554.0V272.7H534.5ZM560.4000000000001 268.7H579.0V272.7H560.4000000000001ZM585.4000000000001 268.7H604.4V272.7H585.4000000000001ZM610.8000000000001 268.7H629.8V272.7H610.8000000000001ZM636.2 268.7H655.5999999999999V272.7H636.2ZM662.0 268.7H681.5V272.7H662.0ZM687.9000000000001 268.7H707.3V272.7H687.9000000000001ZM713.7 268.7H732.3V272.7H713.7ZM738.7 268.7H758.0999999999999V272.7H738.7ZM764.5 268.7H778V272.7H764.5ZM361.9 252.3H372.90000000000003V255H361.9ZM388.4 252.3H401.3V255H388.4ZM480.2 82.5L480.2 78.5L481.5 76.5L482.3 77.5L483.3 75.3V80L482 81.5ZM502.3 82L503.2 76.5L504.8 75.2L506 72.8L507.2 70.3L508.4 69V74L506.5 76.8L504.5 79.5ZM527.75 67.3H534.8499999999999V71.3H527.75ZM553.6500000000001 67.3H560.75V71.3H553.6500000000001ZM578.6500000000001 67.3H585.75V71.3H578.6500000000001ZM604.0500000000001 67.3H611.15V71.3H604.0500000000001ZM629.45 67.3H636.55V71.3H629.45ZM655.25 67.3H662.3499999999999V71.3H655.25ZM681.1500000000001 67.3H688.25V71.3H681.1500000000001ZM706.95 67.3H714.05V71.3H706.95ZM731.95 67.3H739.05V71.3H731.95ZM757.75 67.3H764.8499999999999V71.3H757.75Z" fill="#f2f21e"/><path d="M23.0 270.2h3v1h-3zM25.0 268.7h1v0.7h-1zM28.0 270.2h2v1h-2zM33.0 270.2h2v1h-2zM39.0 271.9h1v0.8h-1zM43.0 270.2h5v1h-5zM44.0 271.9h1v0.8h-1zM49.0 270.2h3v1h-3zM55.0 270.2h3v1h-3zM60.0 270.2h3v1h-3zM67.0 270.2h5v1h-5zM73.0 270.2h3v1h-3zM74.0 271.9h1v0.8h-1zM86.0 270.2h5v1h-5zM87.0 271.9h1v0.8h-1zM94.0 270.2h2v1h-2zM101.0 270.2h4v1h-4zM109.0 270.2h2v1h-2zM114.0 270.2h4v1h-4zM122.0 270.2h5v1h-5zM130.0 270.2h2v1h-2zM137.0 270.2h3v1h-3zM145.0 270.2h5v1h-5zM165.0 270.2h3v1h-3zM166.0 271.9h1v0.8h-1zM170.0 270.2h3v1h-3zM172.0 268.7h1v0.7h-1zM178.0 270.2h4v1h-4zM183.0 270.2h5v1h-5zM191.0 270.2h2v1h-2zM192.0 271.9h1v0.8h-1zM199.0 270.2h4v1h-4zM201.0 268.7h1v0.7h-1zM205.0 270.2h4v1h-4zM207.0 268.7h1v0.7h-1zM211.0 270.2h3v1h-3zM218.0 270.2h2v1h-2zM226.0 270.2h4v1h-4zM227.0 271.9h1v0.8h-1zM228.0 268.7h1v0.7h-1zM233.0 270.2h5v1h-5zM235.0 268.7h1v0.7h-1zM238.0 270.2h4v1h-4zM239.0 271.9h1v0.8h-1zM248.0 270.2h4v1h-4zM262.0 270.2h3v1h-3zM268.0 270.2h5v1h-5zM270.0 268.7h1v0.7h-1zM275.0 268.7h1v0.7h-1zM280.0 270.2h4v1h-4zM286.0 270.2h5v1h-5zM287.0 271.9h1v0.8h-1zM291.0 270.2h4v1h-4zM293.0 268.7h1v0.7h-1zM317.0 270.2h2v1h-2zM319.0 268.7h1v0.7h-1zM323.0 270.2h5v1h-5zM325.0 268.7h1v0.7h-1zM331.0 270.2h4v1h-4zM332.0 271.9h1v0.8h-1zM336.0 270.2h2v1h-2zM345.0 271.9h1v0.8h-1zM349.0 270.2h4v1h-4zM356.0 270.2h5v1h-5zM358.0 268.7h1v0.7h-1zM381.0 268.7h1v0.7h-1zM385.0 270.2h2v1h-2zM408.0 270.2h2v1h-2zM417.0 271.9h1v0.8h-1zM422.0 270.2h2v1h-2zM433.0 270.2h5v1h-5zM439.0 270.2h4v1h-4zM446.0 271.9h1v0.8h-1zM447.0 268.7h1v0.7h-1zM453.0 270.2h3v1h-3zM462.0 268.7h1v0.7h-1zM467.0 270.2h3v1h-3zM472.0 270.2h5v1h-5zM473.0 271.9h1v0.8h-1zM499.0 270.2h4v1h-4zM500.0 271.9h1v0.8h-1zM512.0 270.2h4v1h-4zM514.0 268.7h1v0.7h-1zM519.0 271.9h1v0.8h-1zM524.0 271.9h1v0.8h-1zM538.0 270.2h5v1h-5zM540.0 268.7h1v0.7h-1zM544.0 271.9h1v0.8h-1zM566.0 270.2h2v1h-2zM576.0 268.7h1v0.7h-1zM591.0 270.2h3v1h-3zM598.0 270.2h3v1h-3zM620.0 268.7h1v0.7h-1zM623.0 270.2h3v1h-3zM644.0 270.2h5v1h-5zM669.0 270.2h4v1h-4zM671.0 268.7h1v0.7h-1zM690.0 270.2h3v1h-3zM691.0 271.9h1v0.8h-1zM697.0 270.2h4v1h-4zM703.0 270.2h4v1h-4zM705.0 268.7h1v0.7h-1zM718.0 270.2h4v1h-4zM723.0 270.2h2v1h-2zM724.0 271.9h1v0.8h-1zM743.0 270.2h3v1h-3zM744.0 271.9h1v0.8h-1zM749.0 270.2h5v1h-5zM770.0 270.2h3v1h-3zM771.0 271.9h1v0.8h-1zM529.8 69.6h2.6v1.7h-2zM532.3 67.2h1v0.9h-1zM555.7 69.6h2.6v1.7h-2zM555.0 67.2h1v0.9h-1zM580.7 69.6h2.6v1.7h-2zM583.2 67.2h1v0.9h-1zM606.1 69.6h2.6v1.7h-2zM605.4 67.2h1v0.9h-1zM631.5 69.6h2.6v1.7h-2zM634.0 67.2h1v0.9h-1zM657.3 69.6h2.6v1.7h-2zM659.8 67.2h1v0.9h-1zM683.2 69.6h2.6v1.7h-2zM685.7 67.2h1v0.9h-1zM709.0 69.6h1.5v1.7h-2zM708.3 67.2h1v0.9h-1zM734.0 69.6h1.5v1.7h-2zM733.3 67.2h1v0.9h-1zM759.8 69.6h1.5v1.7h-2zM762.3 67.2h1v0.9h-1zM364.0 254h1.2v1.4h-1.2zM367.5 254h1.2v1.4h-1.2zM370.0 254h1.2v1.4h-1.2zM390.5 254h1.2v1.4h-1.2zM394.0 254h1.2v1.4h-1.2zM396.5 254h1.2v1.4h-1.2z" fill="#000"/><path d="" fill="#f2f21e"/><path d="M145.75 21.25 H154.25 Q155.75 21.25 155.75 22.75 V31.23 Q155.75 32.43 153.75 33.03 L150.0 34.25 L146.25 33.03 Q144.25 32.43 144.25 31.23 V22.75 Q144.25 21.25 145.75 21.25Z" fill="#000" stroke="#8c36d8" stroke-width="1.5"/><path d="M146.36 25.43 H153.64 M150.0 25.43 V31.52" fill="none" stroke="#a040e8" stroke-width="1.9"/><path d="M0.6 261.2 H14.8 L19.5 270 L14.8 278.5 H0.6Z" fill="#000" stroke="#f2f21e" stroke-width="1.2"/><text x="4" y="275" fill="#f2f21e" style="font-family:'Liberation Sans',sans-serif;font-size:13px;letter-spacing:0">2</text><path d="M781.5 270 L793.5 264.8 V275.2Z" fill="#b42ee4"/><rect x="26.2" y="426.2" width="186" height="91.2" rx="3.5" fill="#000" stroke="#6eaec8" stroke-width="1.8"/><text x="33.6" y="442.3" fill="#ececec" class="th">△x:59.20ms</text><text x="33.6" y="464.4" fill="#ececec" class="th">1/△x:16.89HZ</text><text x="33.6" y="488.3" fill="#ececec" class="th">x1:-0.191s</text><text x="33.6" y="510" fill="#ececec" class="th">x2:-0.250s</text><rect x="0" y="519" width="319" height="81" fill="#6eaec8"/><rect x="1.5" y="520.1" width="206.5" height="18.9" rx="4" fill="#000"/><rect x="1.5" y="540.6" width="206.5" height="18.2" rx="4" fill="#000"/><rect x="211.5" y="520.3" width="106" height="38.3" rx="4" fill="#000"/><rect x="1.5" y="561" width="315.5" height="36.2" rx="4" fill="#000"/><circle cx="10.2" cy="530" r="7.9" fill="#f40a0a"/><text x="10.2" y="534.6" text-anchor="middle" fill="#000" style="font-family:'Liberation Sans',sans-serif;font-size:14px;font-weight:bold;letter-spacing:0">1</text><text x="18.7" y="536.2" fill="#cc1a1a" class="th">5V-</text><text x="106.3" y="536" fill="#cc1a1a" class="th">0.00div</text><circle cx="10.25" cy="549.6" r="7.9" fill="#f0f01a"/><text x="10.25" y="554.2" text-anchor="middle" fill="#000" style="font-family:'Liberation Sans',sans-serif;font-size:14px;font-weight:bold;letter-spacing:0">2</text><text x="18.7" y="556.2" fill="#dede34" class="th">1V-</text><text x="106.3" y="556.2" fill="#dede34" class="th">0.00div</text><text x="215.8" y="533.9" fill="#ececec" class="th">(12.5KS/s)</text><text x="218.5" y="554.1" fill="#ececec" class="th">Depth:10K</text><circle cx="10.3" cy="570.7" r="7.4" fill="#f0f01a"/><text x="10.3" y="575.3000000000001" text-anchor="middle" fill="#000" style="font-family:'Liberation Sans',sans-serif;font-size:14px;font-weight:bold;letter-spacing:0">2</text><circle cx="10.3" cy="589.4" r="7.4" fill="#f0f01a"/><text x="10.3" y="594.0" text-anchor="middle" fill="#000" style="font-family:'Liberation Sans',sans-serif;font-size:14px;font-weight:bold;letter-spacing:0">2</text><circle cx="168.2" cy="570.7" r="7.4" fill="#f0f01a"/><text x="168.2" y="575.3000000000001" text-anchor="middle" fill="#000" style="font-family:'Liberation Sans',sans-serif;font-size:14px;font-weight:bold;letter-spacing:0">2</text><circle cx="168.2" cy="589.4" r="7.4" fill="#f0f01a"/><text x="168.2" y="594.0" text-anchor="middle" fill="#000" style="font-family:'Liberation Sans',sans-serif;font-size:14px;font-weight:bold;letter-spacing:0">2</text><text x="21.4" y="574.8" fill="#dede34" class="th">F:50.68Hz</text><text x="21.4" y="593.7" fill="#dede34" class="th">+D:6.7%</text><text x="181" y="574.8" fill="#dede34" class="th">Vk:1.203v</text><text x="181" y="593.7" fill="#dede34" class="th">V:365.5mv</text><rect x="319" y="539" width="481" height="61" fill="#0565ae"/><rect x="797" y="539" width="3" height="61" fill="#04508a"/><rect x="319.4" y="519.7" width="98.3" height="17.5" rx="8.75" fill="#000"/><text x="337.5" y="534" fill="#ececec" class="th">M:40ms</text><rect x="664.6" y="520" width="128.7" height="17.5" rx="8.75" fill="#000"/><circle cx="675.4" cy="528.4" r="8" fill="#f0f01a"/><text x="675.4" y="533.3" text-anchor="middle" fill="#000" style="font-family:'Liberation Sans',sans-serif;font-size:13px;font-weight:bold;letter-spacing:0">2</text><path d="M685 535.1 H693.7 L697.4 522.9 H704.7" fill="none" stroke="#ececec" stroke-width="1.2"/><text x="707.5" y="533.6" fill="#ececec" class="th">0.00mV</text><rect x="322.5" y="540.5" width="89.9" height="56.5" rx="2.5" fill="#06408c"/><rect x="322.5" y="540.5" width="88.7" height="55.3" rx="2.5" fill="#0a82ea"/><path d="M323.3 593.8 V543.5 Q323.3 541.3 325.5 541.3 H409.7" fill="none" stroke="#4aaaf4" stroke-width="1.3"/><path d="M324.0 595.3 H410.7 V542.5" fill="none" stroke="#0848a0" stroke-width="1.4"/><rect x="597.3" y="540.4" width="89.9" height="57.6" rx="2.5" fill="#06408c"/><rect x="597.3" y="540.4" width="88.7" height="56.4" rx="2.5" fill="#0a82ea"/><path d="M598.0999999999999 594.8 V543.4 Q598.0999999999999 541.1999999999999 600.3 541.1999999999999 H684.5" fill="none" stroke="#4aaaf4" stroke-width="1.3"/><path d="M598.8 596.3 H685.5 V542.4" fill="none" stroke="#0848a0" stroke-width="1.4"/><text x="345.8" y="562" fill="#0c2058" font-weight="bold">Type</text><rect x="340.8" y="571" width="50" height="19.6" fill="#e8e8e8"/><text x="342.8" y="586" fill="#000">Image</text><text x="621.7" y="574.2" fill="#0c2a6a" font-weight="bold">Save</text></svg></body></html>
